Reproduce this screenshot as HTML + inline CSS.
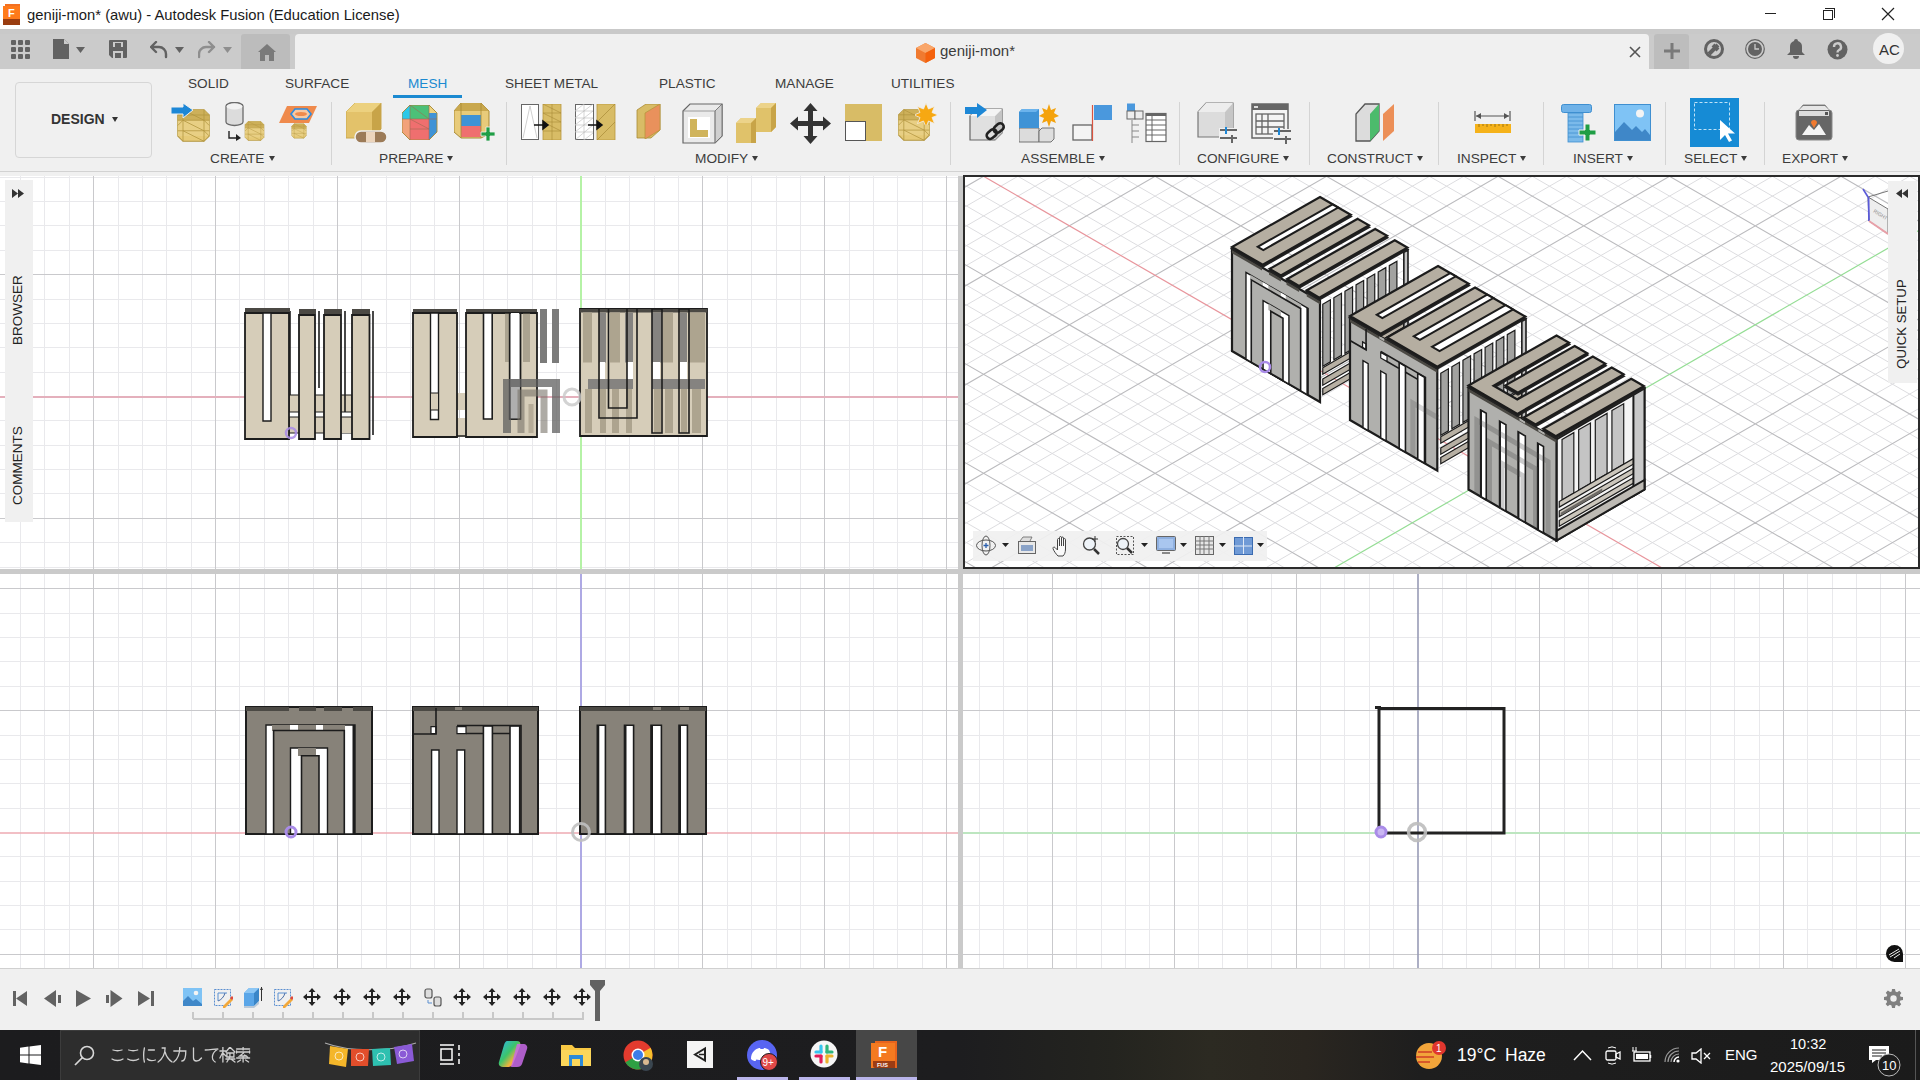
<!DOCTYPE html>
<html><head><meta charset="utf-8">
<style>
*{margin:0;padding:0;box-sizing:border-box}
html,body{width:1920px;height:1080px;overflow:hidden;background:#f0f0f0;font-family:"Liberation Sans",sans-serif;position:relative}
.a{position:absolute}
.t{position:absolute;white-space:nowrap;line-height:1}
#title{left:0;top:0;width:1920px;height:29px;background:#fff}
#qbar{left:0;top:29px;width:1920px;height:40px;background:#cbcbcb}
#ribbon{left:0;top:69px;width:1920px;height:103px;background:#f0f0f0;border-bottom:1px solid #d2d2d2}
.tab{font-size:13.6px;color:#3c3c3c;top:77px}
.grp{font-size:13.7px;color:#3c3c3c;top:152px}
.sep{position:absolute;top:102px;width:1px;height:63px;background:#d4d4d4}
.tri{display:inline-block;width:0;height:0;border-left:3.5px solid transparent;border-right:3.5px solid transparent;border-top:5px solid #3c3c3c;margin-left:4px;vertical-align:2px}
#vp{left:0;top:172px;width:1920px;height:797px;background:#cacaca}
#timeline{left:0;top:969px;width:1920px;height:61px;background:#f0f0f0}
#taskbar{left:0;top:1030px;width:1920px;height:50px;background:#1f2023}
</style></head><body>
<div id="title" class="a">
  <svg class="a" style="left:3px;top:4px" width="19" height="21" viewBox="0 0 19 21"><path d="M2 0h15v18H2z" fill="#f37021"/><path d="M0 2h17v19H0z" fill="#ff7a1a"/><path d="M0 15h17v6H0z" fill="#9a3d10"/><text x="5" y="13" font-size="11" font-weight="bold" fill="#fff" font-family="Liberation Sans">F</text></svg>
  <div class="t" style="left:27px;top:8px;font-size:14.8px;color:#1a1a1a">geniji-mon* (awu) - Autodesk Fusion (Education License)</div>
  <div class="a" style="left:1765px;top:13px;width:11px;height:1px;background:#222"></div>
  <div class="a" style="left:1823px;top:10px;width:10px;height:10px;border:1px solid #222"></div>
  <div class="a" style="left:1825px;top:8px;width:10px;height:10px;border-top:1px solid #222;border-right:1px solid #222"></div>
  <svg class="a" style="left:1881px;top:7px" width="14" height="14"><path d="M1 1L13 13M13 1L1 13" stroke="#222" stroke-width="1.2"/></svg>
</div>
<div id="qbar" class="a">
  <div class="a" style="left:0;top:0;width:1920px;height:5px;background:#c9c9c9"></div>
  <svg class="a" style="left:11px;top:11px" width="19" height="19"><g fill="#626262"><rect x="0" y="0" width="5" height="5" rx="1"/><rect x="7" y="0" width="5" height="5" rx="1"/><rect x="14" y="0" width="5" height="5" rx="1"/><rect x="0" y="7" width="5" height="5" rx="1"/><rect x="7" y="7" width="5" height="5" rx="1"/><rect x="14" y="7" width="5" height="5" rx="1"/><rect x="0" y="14" width="5" height="5" rx="1"/><rect x="7" y="14" width="5" height="5" rx="1"/><rect x="14" y="14" width="5" height="5" rx="1"/></g></svg>
  <svg class="a" style="left:53px;top:10px" width="34" height="21"><path d="M0 0h11l5 5v15H0z" fill="#626262"/><path d="M11 0v5h5z" fill="#cbcbcb"/><path d="M23 8h9l-4.5 6z" fill="#626262"/></svg>
  <svg class="a" style="left:109px;top:11px" width="18" height="18"><path d="M0 1a1 1 0 0 1 1-1h16a1 1 0 0 1 1 1v16a1 1 0 0 1-1 1H3l-3-3z" fill="#626262"/><rect x="4" y="2" width="10" height="5" fill="#cbcbcb"/><rect x="6" y="3" width="6" height="4" fill="#626262"/><rect x="4" y="11" width="10" height="7" fill="#cbcbcb"/><rect x="6" y="13" width="6" height="5" fill="#626262"/></svg>
  <svg class="a" style="left:150px;top:12px" width="36" height="18"><path d="M6 1L1 6l5 5M1 6h8a7 7 0 0 1 7 7v3" fill="none" stroke="#626262" stroke-width="2.4" stroke-linecap="round" stroke-linejoin="round"/><path d="M25 6h9l-4.5 6z" fill="#626262"/></svg>
  <svg class="a" style="left:198px;top:12px" width="36" height="18"><path d="M11 1l5 5-5 5M16 6H8a7 7 0 0 0-7 7v3" fill="none" stroke="#8e8e8e" stroke-width="2.4" stroke-linecap="round" stroke-linejoin="round"/><path d="M25 6h9l-4.5 6z" fill="#8e8e8e"/></svg>
  <div class="a" style="left:241px;top:5px;width:49px;height:35px;background:#bcbcbc;border-radius:3px 3px 0 0"></div>
  <svg class="a" style="left:258px;top:15px" width="19" height="18"><path d="M9 0l9 8h-2v9H2V8H0z" fill="#7a7a7a"/><rect x="7" y="11" width="4" height="6" fill="#bcbcbc"/></svg>
  <div class="a" style="left:295px;top:5px;width:1354px;height:35px;background:#f0f0f0;border-radius:4px 4px 0 0"></div>
  <svg class="a" style="left:916px;top:14px" width="19" height="20"><path d="M9.5 0L19 5v10l-9.5 5L0 15V5z" fill="#f07a30"/><path d="M9.5 0L19 5l-9.5 5L0 5z" fill="#f9a66a"/><path d="M9.5 10L19 5v10l-9.5 5z" fill="#f4610d"/></svg>
  <div class="t" style="left:940px;top:14px;font-size:15px;color:#3c3c3c">geniji-mon*</div>
  <svg class="a" style="left:1629px;top:17px" width="12" height="12"><path d="M1 1L11 11M11 1L1 11" stroke="#555" stroke-width="1.6"/></svg>
  <div class="a" style="left:1654px;top:5px;width:35px;height:35px;background:#bdbdbd;border-radius:3px 3px 0 0"></div>
  <svg class="a" style="left:1664px;top:14px" width="16" height="16"><path d="M8 0v16M0 8h16" stroke="#7a7a7a" stroke-width="3"/></svg>
  <svg class="a" style="left:1704px;top:10px" width="20" height="20"><circle cx="10" cy="10" r="8.5" fill="none" stroke="#626262" stroke-width="3"/><path d="M6 14l8-8M9 6l5 5M5 15l2-2" stroke="#626262" stroke-width="4"/></svg>
  <svg class="a" style="left:1745px;top:10px" width="20" height="20"><circle cx="10" cy="10" r="9.3" fill="none" stroke="#626262" stroke-width="1.2"/><circle cx="10" cy="10" r="7" fill="#626262"/><path d="M10 5v5h4" fill="none" stroke="#cbcbcb" stroke-width="1.3"/></svg>
  <svg class="a" style="left:1787px;top:10px" width="18" height="20"><path d="M9 0a2 2 0 0 1 2 2a6 6 0 0 1 4 6v5l3 3H0l3-3V8a6 6 0 0 1 4-6a2 2 0 0 1 2-2z" fill="#626262"/><path d="M6 17h6a3 3 0 0 1-6 0z" fill="#626262"/></svg>
  <svg class="a" style="left:1827px;top:10px" width="21" height="21"><circle cx="10.5" cy="10.5" r="10" fill="#626262"/><path d="M7 8a3.5 3.5 0 1 1 5 3c-1.3.7-1.5 1.2-1.5 2.5" fill="none" stroke="#cbcbcb" stroke-width="2.4"/><circle cx="10.5" cy="16.5" r="1.4" fill="#cbcbcb"/></svg>
  <div class="a" style="left:1873px;top:4px;width:31px;height:31px;border-radius:50%;background:#f0f0f0"></div>
  <div class="t" style="left:1879px;top:13px;font-size:15px;color:#333">AC</div>
</div>
<div id="ribbon" class="a">
  <div class="a" style="left:15px;top:13px;width:137px;height:76px;border:1px solid #d6d6d6;border-radius:4px;background:#f0f0f0"></div>
  <div class="t" style="left:51px;top:43px;font-size:14px;font-weight:bold;color:#333">DESIGN<span class="tri" style="margin-left:7px;border-top-color:#333"></span></div>
</div>
<div class="t tab" style="left:188px">SOLID</div>
<div class="t tab" style="left:285px">SURFACE</div>
<div class="t tab" style="left:408px;color:#1b8ad1">MESH</div>
<div class="a" style="left:393px;top:95px;width:69px;height:3px;background:#1b8ad1"></div>
<div class="t tab" style="left:505px">SHEET METAL</div>
<div class="t tab" style="left:659px">PLASTIC</div>
<div class="t tab" style="left:775px">MANAGE</div>
<div class="t tab" style="left:891px">UTILITIES</div>
<div class="t grp" style="left:210px">CREATE<span class="tri"></span></div>
<div class="t grp" style="left:379px">PREPARE<span class="tri"></span></div>
<div class="t grp" style="left:695px">MODIFY<span class="tri"></span></div>
<div class="t grp" style="left:1021px">ASSEMBLE<span class="tri"></span></div>
<div class="t grp" style="left:1197px">CONFIGURE<span class="tri"></span></div>
<div class="t grp" style="left:1327px">CONSTRUCT<span class="tri"></span></div>
<div class="t grp" style="left:1457px">INSPECT<span class="tri"></span></div>
<div class="t grp" style="left:1573px">INSERT<span class="tri"></span></div>
<div class="t grp" style="left:1684px">SELECT<span class="tri"></span></div>
<div class="t grp" style="left:1782px">EXPORT<span class="tri"></span></div>
<div class="sep" style="left:331px"></div>
<div class="sep" style="left:506px"></div>
<div class="sep" style="left:950px"></div>
<div class="sep" style="left:1179px"></div>
<div class="sep" style="left:1309px"></div>
<div class="sep" style="left:1438px"></div>
<div class="sep" style="left:1543px"></div>
<div class="sep" style="left:1665px"></div>
<div class="sep" style="left:1764px"></div>
<svg class="a" style="left:176px;top:108px" width="35" height="35" viewBox="0 0 40 40"><path d="M8 2h24l6 6v24l-6 6H8l-6-6V8z" fill="#e6ca78" stroke="#b39640" stroke-width="1.2"/><path d="M8 2h24l6 6v6H2V8z" fill="#cdb05a"/><path d="M2 14h36v18H2z" fill="#e8cf84"/><path d="M2 8h36M2 14h36M2 26h36M8 2v36M32 2v36M8 14l24 12M8 26l24 12M8 2l24 12M2 20l6-6M32 14l6 6M32 26l6 6" fill="none" stroke="#b39640" stroke-width="0.9"/></svg>
<svg class="a" style="left:171px;top:103px" width="24" height="16"><path d="M0 4h12V0l10 7-10 8v-4H0z" fill="#1d87d6" stroke="#f0f0f0" stroke-width="1"/></svg>
<svg class="a" style="left:225px;top:102px" width="20" height="25"><path d="M1 4a8.5 3.5 0 0 1 17 0v16a8.5 3.5 0 0 1-17 0z" fill="#dcdcdc" stroke="#6b6b6b" stroke-width="1.3"/><ellipse cx="9.5" cy="4.5" rx="8" ry="3" fill="#f2f2f2"/></svg>
<svg class="a" style="left:244px;top:119px" width="21" height="24" viewBox="0 0 40 40"><path d="M8 2h24l6 6v24l-6 6H8l-6-6V8z" fill="#e6ca78" stroke="#b39640" stroke-width="1.2"/><path d="M8 2h24l6 6v6H2V8z" fill="#cdb05a"/><path d="M2 14h36v18H2z" fill="#e8cf84"/><path d="M2 8h36M2 14h36M2 26h36M8 2v36M32 2v36M8 14l24 12M8 26l24 12M8 2l24 12M2 20l6-6M32 14l6 6M32 26l6 6" fill="none" stroke="#b39640" stroke-width="0.9"/></svg>
<svg class="a" style="left:228px;top:131px" width="14" height="10"><path d="M1 0v7h8" fill="none" stroke="#222" stroke-width="1.4"/><path d="M8 3l5 4-5 3z" fill="#222"/></svg>
<svg class="a" style="left:288px;top:123px" width="22" height="16" viewBox="0 0 40 40"><path d="M8 2h24l6 6v24l-6 6H8l-6-6V8z" fill="#e6ca78" stroke="#b39640" stroke-width="1.2"/><path d="M8 2h24l6 6v6H2V8z" fill="#cdb05a"/><path d="M2 14h36v18H2z" fill="#e8cf84"/><path d="M2 8h36M2 14h36M2 26h36M8 2v36M32 2v36M8 14l24 12M8 26l24 12M8 2l24 12M2 20l6-6M32 14l6 6M32 26l6 6" fill="none" stroke="#b39640" stroke-width="0.9"/></svg>
<svg class="a" style="left:279px;top:105px" width="39" height="19"><path d="M8 1h30l-8 17H0z" fill="#ef8a4c"/><path d="M12 9l4-5h12l4 5-4 5H16z" fill="#f7c9a3" stroke="#2b8be0" stroke-width="1.6"/><ellipse cx="22" cy="9" rx="6" ry="2" fill="#ef8a4c"/></svg>
<svg class="a" style="left:346px;top:103px" width="41" height="41"><path d="M0 9l9-9h26v26l-9 9H0z" fill="#e3c26a" stroke="#c9a84e" stroke-width="1"/><path d="M0 9l9-9h26l-9 9z" fill="#ecd17f"/><path d="M26 9l9-9v26l-9 9z" fill="#c8a448"/><rect x="9" y="28" width="32" height="12" rx="6" fill="#9c7b58" stroke="#f0f0f0" stroke-width="1.5"/><rect x="20" y="29" width="9" height="10" fill="#ecd5bd"/></svg>
<svg class="a" style="left:402px;top:105px" width="36" height="35" viewBox="0 0 36 35"><path d="M8 0h19l8 8v19l-8 8H8l-8-8V8z" fill="#ef6f6f"/><path d="M8 0h19v14H8z" fill="#4cc078"/><path d="M0 8l8-8v14H0z" fill="#2bc8e8"/><path d="M27 0l8 8v19l-8 8z" fill="#3f93d6"/><path d="M27 0l8 8h-8z" fill="#edd27f"/><path d="M0 14h8v21l-8-8z" fill="#f2a27a"/><path d="M8 0h19l8 8v19l-8 8H8l-8-8V8z" fill="none" stroke="#a88a35" stroke-width="0.9"/><path d="M8 0v35M27 0v35M0 14h35M8 24h19M8 14l19 10M8 0l19 14" stroke="#a06a50" stroke-width="0.6" fill="none"/></svg>
<svg class="a" style="left:454px;top:103px" width="41" height="39" viewBox="0 0 41 39"><path d="M7 0h20l8 8v23l-8 4H7l-7-6V8z" fill="#e8cb7a" stroke="#a88a35" stroke-width="1"/><path d="M7 0h20l8 8H0z" fill="#c9a84e"/><rect x="7" y="12" width="20" height="11" fill="#3f93d6"/><rect x="7" y="23" width="20" height="11" fill="#ef6f6f"/><path d="M7 0v35M27 0v35" stroke="#a88a35" stroke-width="0.8"/><path d="M32 24h4v5h5v4h-5v5h-4v-5h-5v-4h5z" fill="#1f9e45" stroke="#f0f0f0" stroke-width="0.8"/></svg>
<svg class="a" style="left:521px;top:104px" width="41" height="36"><rect x="0.5" y="0.5" width="17" height="35" fill="#fff" stroke="#666" stroke-width="1"/><path d="M2 34L9 2l7 32" fill="none" stroke="#bbb" stroke-width="0.7"/><rect x="22" y="0" width="18" height="36" fill="#d8bc66" stroke="#b8973e" stroke-width="0.8"/><path d="M22 9h18M22 18h18M22 27h18M31 0v36M22 9l18 9M22 18l18 9M22 0l18 9" stroke="#a88a35" stroke-width="0.6" fill="none"/><path d="M13 21h12M22 17l5 4-5 4z" stroke="#111" stroke-width="1.5" fill="#111"/></svg>
<svg class="a" style="left:575px;top:104px" width="41" height="36"><rect x="0.5" y="0.5" width="18" height="35" fill="#fff" stroke="#666" stroke-width="1"/><path d="M0 7h18M0 14h18M0 21h18M0 28h18M9 0v36M0 7l9-7M0 14l18-14M0 21l18-14M0 28l18-14M0 36l18-15M9 36l9-7" stroke="#bbb" stroke-width="0.6" fill="none"/><rect x="22" y="0" width="18" height="36" fill="#d8bc66" stroke="#b8973e" stroke-width="0.8"/><path d="M22 36l18-18M22 18l18-18" stroke="#a88a35" stroke-width="0.7"/><path d="M13 21h12M22 17l5 4-5 4z" stroke="#111" stroke-width="1.5" fill="#111"/></svg>
<svg class="a" style="left:636px;top:104px" width="26" height="35"><path d="M1 6l9-6h14v26l-9 8H1z" fill="#d8bc66" stroke="#a88a35" stroke-width="0.8"/><path d="M9 9l15-9v26l-15 9z" fill="#e9915c" stroke="#b8973e" stroke-width="0.8"/></svg>
<svg class="a" style="left:682px;top:103px" width="41" height="41"><path d="M1 8l7-7h32v32l-7 7H1z" fill="#eaeaea" stroke="#666" stroke-width="1.2"/><path d="M33 8l7-7v32l-7 7z" fill="#d0d0d0" stroke="#666" stroke-width="0.8"/><path d="M1 8h32v32" fill="none" stroke="#888" stroke-width="0.8"/><rect x="6" y="14" width="22" height="21" fill="#fff"/><path d="M8 16h7v11h11v7H8z" fill="#d0b45c"/></svg>
<svg class="a" style="left:736px;top:103px" width="41" height="41"><path d="M0 20l5-5h15V5l5-5h15v24l-5 5H20v10l-5 1H0z" fill="#e0c26a"/><path d="M0 20l5-5h15l-5 5zM20 5l5-5h15l-5 5z" fill="#ecd38a"/><path d="M35 5l5-5v24l-5 5zM15 20l5-5v25h-5z" fill="#c8a448"/></svg>
<svg class="a" style="left:790px;top:103px" width="41" height="41"><path d="M20.5 0l7 8h-4.5v10h10v-4.5l8 7-8 7V23h-10v10h4.5l-7 8-7-8H18V23H8v4.5l-8-7 8-7V18h10V8h-4.5z" fill="#333"/></svg>
<svg class="a" style="left:845px;top:104px" width="38" height="37"><rect x="0" y="0" width="37" height="37" fill="#d8bc66"/><rect x="0.5" y="17.5" width="20" height="19" fill="#fff" stroke="#555" stroke-width="1"/></svg>
<svg class="a" style="left:897px;top:108px" width="34" height="34" viewBox="0 0 40 40"><path d="M8 2h24l6 6v24l-6 6H8l-6-6V8z" fill="#e6ca78" stroke="#b39640" stroke-width="1.2"/><path d="M8 2h24l6 6v6H2V8z" fill="#cdb05a"/><path d="M2 14h36v18H2z" fill="#e8cf84"/><path d="M2 8h36M2 14h36M2 26h36M8 2v36M32 2v36M8 14l24 12M8 26l24 12M8 2l24 12M2 20l6-6M32 14l6 6M32 26l6 6" fill="none" stroke="#b39640" stroke-width="0.9"/></svg>
<svg class="a" style="left:915px;top:103px" width="22" height="22"><path d="M11 0l2.5 6 6-2.5-2.5 6 6 2.5-6 2.5 2.5 6-6-2.5L11 24l-2.5-6-6 2.5 2.5-6L-1 12l6-2.5-2.5-6 6 2.5z" fill="#f7a812" stroke="#f0f0f0" stroke-width="0.8"/></svg>
<svg class="a" style="left:965px;top:103px" width="42" height="40"><path d="M5 37V13l7-7h25v24l-7 7z" fill="#e0e0e0" stroke="#666" stroke-width="1.2"/><path d="M30 13l7-7v24l-7 7z" fill="#c4c4c4"/><path d="M5 13l7-7h25l-7 7z" fill="#f4f4f4"/><path d="M0 4h12V0l10 7-10 8v-4H0z" fill="#1d87d6"/><g fill="none" stroke="#222" stroke-width="2.6"><rect x="21" y="28" width="11" height="7" rx="3.5" transform="rotate(-40 26 31)"/><rect x="28" y="22" width="11" height="7" rx="3.5" transform="rotate(-40 33 25)"/></g></svg>
<svg class="a" style="left:1019px;top:103px" width="40" height="40"><path d="M0 39V25h20v14z" fill="#dcdcdc" stroke="#666" stroke-width="0.9"/><path d="M20 39V28l3-3h12v11l-3 3z" fill="#dedede" stroke="#666" stroke-width="0.9"/><path d="M0 25V9l3-3h17v19z" fill="#3f93d6"/><path d="M0 9l3-3h17l-3 3z" fill="#6bb3ec"/><path d="M30 1l2 6 5-2-2 5 5 3-5 2 2 5-5-2-2 6-2-6-5 2 2-5-5-2 5-3-2-5 5 2z" fill="#f4a20c"/></svg>
<svg class="a" style="left:1072px;top:104px" width="42" height="38"><rect x="1" y="21" width="19" height="15" fill="#f4f4f4" stroke="#666" stroke-width="1.3"/><path d="M20.5 1v36" stroke="#d9533f" stroke-width="1.2"/><rect x="22" y="1" width="18" height="15" fill="#4a98dd"/></svg>
<svg class="a" style="left:1126px;top:103px" width="41" height="40"><rect x="1" y="7" width="8" height="8" fill="#4a98dd"/><rect x="1" y="0.5" width="8" height="7" fill="#4a98dd"/><rect x="1" y="8" width="8" height="8" fill="#eee" stroke="#666" stroke-width="1"/><rect x="9" y="8" width="8" height="8" fill="#eee" stroke="#666" stroke-width="1"/><path d="M6 17v27M6 22h7M6 28h7M6 34h7" stroke="#888" stroke-width="1"/><rect x="20" y="10.5" width="20" height="28" fill="#fff" stroke="#666" stroke-width="1.2"/><rect x="20" y="10" width="20" height="3" fill="#666"/><path d="M20 17h20M20 22h20M20 27h20M20 32h20M26 13v26" stroke="#666" stroke-width="1"/></svg>
<svg class="a" style="left:1197px;top:102px" width="42" height="42"><path d="M1 35V10l8-9h27v26l-8 8z" fill="#dcdcdc" stroke="#777" stroke-width="1.2"/><path d="M28 10l8-9v26l-8 8z" fill="#c6c6c6"/><path d="M1 10l8-9h27l-8 9z" fill="#ededed"/><rect x="22" y="26" width="18" height="18" fill="#f0f0f0"/><path d="M23 28h17M23 36h17" stroke="#666" stroke-width="2"/><path d="M29 25v7" stroke="#1d87d6" stroke-width="2"/><path d="M35 33v8" stroke="#666" stroke-width="2"/></svg>
<svg class="a" style="left:1251px;top:103px" width="42" height="41"><rect x="1" y="1" width="36" height="34" fill="#f4f4f4" stroke="#666" stroke-width="1.5"/><rect x="1" y="1" width="36" height="6" fill="#666"/><rect x="3" y="3" width="4" height="2" fill="#ddd"/><rect x="5" y="11" width="28" height="20" fill="none" stroke="#666" stroke-width="1.3"/><path d="M11 11v20M17 11v20M5 18h28M5 24h28" stroke="#666" stroke-width="1.3"/><rect x="22" y="26" width="19" height="15" fill="#f0f0f0"/><path d="M23 28h17M23 36h17" stroke="#666" stroke-width="2"/><path d="M28 25v7" stroke="#1d87d6" stroke-width="2"/><path d="M35 33v8" stroke="#666" stroke-width="2"/></svg>
<svg class="a" style="left:1355px;top:102px" width="42" height="41"><path d="M1 39V12l9-10h14v27l-9 10z" fill="#dcdcdc" stroke="#555" stroke-width="1.3"/><path d="M15 39V12l9-10v27z" fill="#4cbb6c"/><path d="M28 39V12l11-10v27z" fill="#ec8f57"/></svg>
<svg class="a" style="left:1474px;top:111px" width="38" height="23"><path d="M1 0v10M36 0v10M2 5h33" stroke="#555" stroke-width="1.2"/><path d="M2 5l5-3v6zM35 5l-5-3v6z" fill="#555"/><rect x="1" y="13" width="36" height="9" fill="#f5b21a"/><path d="M5 13v3M9 13v2M13 13v3M17 13v2M21 13v3M25 13v2M29 13v3M33 13v2" stroke="#8a6410" stroke-width="0.8"/></svg>
<svg class="a" style="left:1561px;top:104px" width="40" height="40"><rect x="0.5" y="0.5" width="30" height="8" rx="2" fill="#6fb2e8" stroke="#3f8fd0"/><rect x="7" y="9" width="15" height="29" fill="#7bbaea" stroke="#3f8fd0" stroke-width="0.8"/><path d="M7 13h15M7 17h15M7 21h15M7 25h15M7 29h15M7 33h15" stroke="#3f8fd0" stroke-width="0.8"/><path d="M24 20h5v6h6v5h-6v6h-5v-6h-6v-5h6z" fill="#1f9e45" stroke="#f0f0f0" stroke-width="1"/></svg>
<svg class="a" style="left:1614px;top:104px" width="37" height="37"><rect x="0.5" y="0.5" width="36" height="36" fill="#7fc3f5" stroke="#3f8fd0"/><circle cx="26" cy="9.5" r="4" fill="#f4f4f4"/><path d="M1 36V28l9-10 8 8 4-4 6 6 3-3 5 6v5z" fill="#3f87c8"/></svg>
<svg class="a" style="left:1690px;top:98px" width="49" height="49"><rect x="0" y="0" width="49" height="49" fill="#168bd5"/><rect x="4.5" y="4.5" width="35" height="27" fill="none" stroke="#bfe2f7" stroke-width="1" stroke-dasharray="3 2"/><path d="M30 22v20l5-5 4 7 3-1.5-4-7h7z" fill="#fff"/></svg>
<svg class="a" style="left:1795px;top:104px" width="38" height="37"><path d="M4 6l4-5h22l4 5h0a3 3 0 0 1 3 3v24a3 3 0 0 1-3 3H4a3 3 0 0 1-3-3V9a3 3 0 0 1 3-3z" fill="#666" stroke="#888" stroke-width="1"/><path d="M8 2h22l4 4H4z" fill="#e6e6e6"/><rect x="4" y="7" width="30" height="5" fill="#dcdcdc"/><rect x="30" y="8" width="3" height="3" fill="#555"/><path d="M7 31l7-10 5 5 5-6 7 11z" fill="#f4f4f4"/><path d="M19 16a3 3 0 0 1 3 3l-3 5-3-5a3 3 0 0 1 3-3z" fill="#f07a30"/></svg>
<div id="vp" class="a"></div>
<!--VP-->
<div class="a" style="left:0;top:172px;width:1920px;height:4px;background:#f0f0f0"></div>
<svg class="a" style="left:0px;top:176px;background:#fff" width="958" height="393">
<path d="M20.5 0V393M44.5 0V393M69.5 0V393M118.5 0V393M142.5 0V393M166.5 0V393M191.5 0V393M239.5 0V393M264.5 0V393M288.5 0V393M313.5 0V393M361.5 0V393M386.5 0V393M410.5 0V393M434.5 0V393M483.5 0V393M507.5 0V393M532.5 0V393M556.5 0V393M605.5 0V393M629.5 0V393M654.5 0V393M678.5 0V393M727.5 0V393M751.5 0V393M776.5 0V393M800.5 0V393M849.5 0V393M873.5 0V393M897.5 0V393M922.5 0V393M0 1.5H958M0 25.5H958M0 49.5H958M0 74.5H958M0 123.5H958M0 147.5H958M0 171.5H958M0 196.5H958M0 244.5H958M0 269.5H958M0 293.5H958M0 317.5H958M0 366.5H958M0 391.5H958" stroke="#e9e9ec" stroke-width="1" fill="none"/>
<path d="M93.5 0V393M215.5 0V393M337.5 0V393M459.5 0V393M702.5 0V393M824.5 0V393M946.5 0V393M0 98.5H958M0 342.5H958" stroke="#c9c9cc" stroke-width="1" fill="none"/>
<path d="M0 221H958" stroke="#e4b0bc" stroke-width="2"/>
<path d="M581 0V393" stroke="#b5f2a6" stroke-width="2"/>
<g transform="translate(0 -176)"><g transform="translate(245 308)"><rect x="44" y="87" width="63" height="17" fill="#d6cdb9" stroke="#1c1c1c" stroke-width="1.2" vector-effect="non-scaling-stroke" /><rect x="44" y="109" width="79" height="16" fill="#d6cdb9" stroke="#1c1c1c" stroke-width="1.2" vector-effect="non-scaling-stroke" /><rect x="96" y="110" width="11" height="15" fill="#d6cdb9" /><path d="M45 3V87M74 3V80M100 3V104M128 3V127" fill="none" stroke="#1c1c1c" stroke-width="1.6" vector-effect="non-scaling-stroke"/><rect x="0" y="0" width="45" height="5" fill="#4b4944" /><rect x="54" y="1" width="17" height="5" fill="#4b4944" /><rect x="79" y="1" width="18" height="5" fill="#4b4944" /><rect x="107" y="1" width="18" height="5" fill="#4b4944" /><path d="M0 5H44V131H0Z" fill="#d6cdb9" stroke="#1c1c1c" stroke-width="1.8" vector-effect="non-scaling-stroke"/><rect x="18" y="5" width="8" height="108" fill="#ffffff" stroke="#1c1c1c" stroke-width="1.4" vector-effect="non-scaling-stroke" /><rect x="54" y="7" width="16" height="124" fill="#d6cdb9" stroke="#1c1c1c" stroke-width="1.8" vector-effect="non-scaling-stroke" /><rect x="79" y="7" width="17" height="124" fill="#d6cdb9" stroke="#1c1c1c" stroke-width="1.8" vector-effect="non-scaling-stroke" /><rect x="107" y="7" width="17.5" height="124" fill="#d6cdb9" stroke="#1c1c1c" stroke-width="1.8" vector-effect="non-scaling-stroke" /></g><g transform="translate(413 309)"><rect x="0" y="0" width="44" height="4" fill="#4b4944" /><rect x="53" y="0" width="71" height="4" fill="#4b4944" /><rect x="44" y="84" width="9" height="17" fill="#d6cdb9" /><rect x="44" y="109" width="9" height="17" fill="#d6cdb9" /><rect x="44" y="126" width="9" height="2" fill="#4b4944" /><rect x="0" y="4" width="44" height="124" fill="#d6cdb9" stroke="#1c1c1c" stroke-width="1.8" vector-effect="non-scaling-stroke" /><rect x="17.5" y="4" width="8" height="106.5" fill="#ffffff" stroke="#1c1c1c" stroke-width="1.4" vector-effect="non-scaling-stroke" /><rect x="17.5" y="84" width="8" height="17" fill="#d6cdb9" stroke="#1c1c1c" stroke-width="1" vector-effect="non-scaling-stroke" /><rect x="53" y="4" width="71" height="124" fill="#d6cdb9" stroke="#1c1c1c" stroke-width="1.8" vector-effect="non-scaling-stroke" /><rect x="70.5" y="4" width="8.7" height="106" fill="#ffffff" stroke="#1c1c1c" stroke-width="1.6" vector-effect="non-scaling-stroke" /><rect x="96.7" y="4" width="10.7" height="106" fill="#ffffff" stroke="#1c1c1c" stroke-width="1.6" vector-effect="non-scaling-stroke" /><rect x="92" y="4" width="6" height="49" fill="rgba(120,112,96,0.45)" /><rect x="110" y="4" width="7" height="49" fill="rgba(120,112,96,0.45)" /><rect x="96.7" y="4" width="10.7" height="106" fill="#ffffff" stroke="#1c1c1c" stroke-width="1.6" vector-effect="non-scaling-stroke" /><rect x="98" y="4" width="8" height="49" fill="#ffffff" /><rect x="98" y="70" width="8" height="40" fill="rgba(110,110,110,0.55)" /><rect x="127" y="0" width="7" height="54" fill="#7b7b7a" /><rect x="139" y="0" width="7" height="54" fill="#7b7b7a" /><path d="M94 124V74H143V124" fill="none" stroke="rgba(95,95,95,0.75)" stroke-width="8" vector-effect="non-scaling-stroke"/><path d="M108 124V84H131V124" fill="none" stroke="rgba(120,115,105,0.6)" stroke-width="7" vector-effect="non-scaling-stroke"/><path d="M118 124V95" fill="none" stroke="rgba(150,140,120,0.5)" stroke-width="5" vector-effect="non-scaling-stroke"/></g><g transform="translate(580 309)"><rect x="0" y="0" width="127" height="127" fill="#d6cdb9" stroke="#1c1c1c" stroke-width="1.8" vector-effect="non-scaling-stroke" /><rect x="0" y="0" width="127" height="3.5" fill="#4b4944" /><rect x="3" y="3.5" width="9" height="50" fill="#ada48f" /><rect x="19" y="3.5" width="7" height="50" fill="#858380" /><rect x="30" y="3.5" width="10" height="50" fill="#ada48f" /><rect x="45" y="3.5" width="8" height="50" fill="#858380" /><rect x="72" y="3.5" width="10" height="50" fill="#858380" /><rect x="83" y="3.5" width="10" height="50" fill="#ada48f" /><rect x="100" y="3.5" width="7" height="50" fill="#858380" /><rect x="108" y="3.5" width="17" height="50" fill="#ada48f" /><rect x="20" y="53" width="5" height="17" fill="#ffffff" /><rect x="47" y="53" width="6" height="17" fill="#ffffff" /><rect x="73" y="53" width="7" height="17" fill="#ffffff" /><rect x="100" y="53" width="7" height="17" fill="#ffffff" /><rect x="8" y="70" width="45" height="10" fill="#858380" /><rect x="72" y="70" width="53" height="10" fill="#858380" /><rect x="5" y="80" width="7" height="44" fill="#ada48f" /><rect x="20" y="80" width="6" height="44" fill="#ada48f" /><rect x="32" y="80" width="7" height="44" fill="#ada48f" /><rect x="46" y="80" width="6" height="44" fill="#ada48f" /><rect x="74" y="80" width="7" height="44" fill="#ada48f" /><rect x="85" y="80" width="8" height="44" fill="#ada48f" /><rect x="101" y="80" width="6" height="44" fill="#ada48f" /><rect x="112" y="80" width="9" height="44" fill="#ada48f" /><path d="M19 0V109H57V0M28.5 0V99H47V0" fill="none" stroke="#1c1c1c" stroke-width="1.6" vector-effect="non-scaling-stroke"/><rect x="72" y="0" width="10" height="124" fill="none" stroke="#1c1c1c" stroke-width="1.6" vector-effect="non-scaling-stroke" /><rect x="99" y="0" width="10" height="124" fill="none" stroke="#1c1c1c" stroke-width="1.6" vector-effect="non-scaling-stroke" /></g><circle cx="291" cy="433" r="5" fill="none" stroke="#a98be8" stroke-width="2.5" opacity="0.85"/><circle cx="572" cy="397" r="8" fill="none" stroke="#c8c8c8" stroke-width="3" opacity="0.8"/></g>
</svg>
<svg class="a" style="left:0px;top:574px;background:#fff" width="958" height="394">
<path d="M20.5 0V394M44.5 0V394M69.5 0V394M118.5 0V394M142.5 0V394M166.5 0V394M191.5 0V394M239.5 0V394M264.5 0V394M288.5 0V394M313.5 0V394M361.5 0V394M386.5 0V394M410.5 0V394M434.5 0V394M483.5 0V394M507.5 0V394M532.5 0V394M556.5 0V394M605.5 0V394M629.5 0V394M654.5 0V394M678.5 0V394M727.5 0V394M751.5 0V394M776.5 0V394M800.5 0V394M849.5 0V394M873.5 0V394M897.5 0V394M922.5 0V394M0 39.5H958M0 63.5H958M0 87.5H958M0 112.5H958M0 161.5H958M0 185.5H958M0 209.5H958M0 234.5H958M0 282.5H958M0 307.5H958M0 331.5H958M0 355.5H958" stroke="#e9e9ec" stroke-width="1" fill="none"/>
<path d="M93.5 0V394M215.5 0V394M337.5 0V394M459.5 0V394M702.5 0V394M824.5 0V394M946.5 0V394M0 14.5H958M0 136.5H958M0 380.5H958" stroke="#c9c9cc" stroke-width="1" fill="none"/>
<path d="M0 259H958" stroke="#eeaab2" stroke-width="1.6"/>
<path d="M581 0V394" stroke="#aea9e4" stroke-width="2"/>
<g transform="translate(0 -574)"><g transform="translate(246 707)"><rect x="0" y="0" width="126" height="127" fill="#878279" stroke="#1c1c1c" stroke-width="2" vector-effect="non-scaling-stroke" /><rect x="0" y="0" width="43" height="4" fill="#4b4944" /><rect x="53" y="0" width="17" height="4" fill="#4b4944" /><rect x="78" y="0" width="18" height="4" fill="#4b4944" /><rect x="107" y="0" width="19" height="4" fill="#4b4944" /><rect x="20" y="18" width="89" height="109" fill="#ffffff" stroke="#1c1c1c" stroke-width="1.4" vector-effect="non-scaling-stroke" /><rect x="26" y="18" width="73" height="6" fill="#878279" /><rect x="44" y="18" width="8" height="6" fill="#ffffff" /><rect x="70" y="18" width="7" height="6" fill="#ffffff" /><rect x="27.6" y="23.5" width="70.7" height="103.5" fill="#878279" stroke="#1c1c1c" stroke-width="1.6" vector-effect="non-scaling-stroke" /><rect x="44.5" y="41" width="37" height="86" fill="#ffffff" stroke="#1c1c1c" stroke-width="1.4" vector-effect="non-scaling-stroke" /><rect x="52" y="41" width="18" height="8" fill="#878279" /><rect x="55.5" y="48.7" width="17.5" height="78.3" fill="#878279" stroke="#1c1c1c" stroke-width="1.6" vector-effect="non-scaling-stroke" /><rect x="106.5" y="18" width="2.5" height="109" fill="#1c1c1c" /></g><g transform="translate(413 707)"><rect x="0" y="0" width="125" height="127" fill="#878279" stroke="#1c1c1c" stroke-width="2" vector-effect="non-scaling-stroke" /><rect x="0" y="0" width="125" height="4" fill="#4b4944" /><rect x="42" y="0" width="7" height="3" fill="#878279" /><rect x="18" y="19.6" width="5" height="7" fill="#ffffff" stroke="#1c1c1c" stroke-width="1.2" vector-effect="non-scaling-stroke" /><rect x="44" y="19.6" width="9" height="7" fill="#ffffff" stroke="#1c1c1c" stroke-width="1.2" vector-effect="non-scaling-stroke" /><rect x="18.6" y="43" width="7.4" height="84" fill="#ffffff" stroke="#1c1c1c" stroke-width="1.4" vector-effect="non-scaling-stroke" /><rect x="44" y="43" width="7.7" height="84" fill="#ffffff" stroke="#1c1c1c" stroke-width="1.4" vector-effect="non-scaling-stroke" /><rect x="70.4" y="19" width="9" height="108" fill="#ffffff" stroke="#1c1c1c" stroke-width="1.6" vector-effect="non-scaling-stroke" /><rect x="97" y="19" width="9.7" height="108" fill="#ffffff" stroke="#1c1c1c" stroke-width="1.6" vector-effect="non-scaling-stroke" /><path d="M23 1V27H0M44 18.5H108V127M53 26.5H70M79 26.5H97" fill="none" stroke="#1c1c1c" stroke-width="1.6" vector-effect="non-scaling-stroke"/></g><g transform="translate(580 707)"><rect x="0" y="0" width="126" height="127" fill="#878279" stroke="#1c1c1c" stroke-width="2" vector-effect="non-scaling-stroke" /><rect x="0" y="0" width="126" height="4" fill="#4b4944" /><rect x="73" y="0" width="8" height="3" fill="#878279" /><rect x="100" y="0" width="9" height="3" fill="#878279" /><rect x="17.3" y="18.3" width="8.1" height="108.7" fill="#ffffff" stroke="#1c1c1c" stroke-width="1.6" vector-effect="non-scaling-stroke" /><rect x="17.3" y="18.3" width="2" height="108.7" fill="#1c1c1c" /><rect x="44.5" y="18.3" width="9.1" height="108.7" fill="#ffffff" stroke="#1c1c1c" stroke-width="1.6" vector-effect="non-scaling-stroke" /><rect x="44.5" y="18.3" width="2" height="108.7" fill="#1c1c1c" /><rect x="71" y="18.3" width="10.4" height="108.7" fill="#ffffff" stroke="#1c1c1c" stroke-width="1.6" vector-effect="non-scaling-stroke" /><rect x="71" y="18.3" width="2" height="108.7" fill="#1c1c1c" /><rect x="99" y="18.3" width="8.4" height="108.7" fill="#ffffff" stroke="#1c1c1c" stroke-width="1.6" vector-effect="non-scaling-stroke" /><rect x="99" y="18.3" width="2" height="108.7" fill="#1c1c1c" /></g><circle cx="581" cy="832" r="8.5" fill="none" stroke="#c0c0c0" stroke-width="3" opacity="0.9"/><circle cx="291" cy="832" r="5" fill="none" stroke="#a98be8" stroke-width="3"/></g>
</svg>
<svg class="a" style="left:963px;top:574px;background:#fff" width="957" height="394">
<path d="M16.5 0V394M40.5 0V394M64.5 0V394M113.5 0V394M138.5 0V394M162.5 0V394M186.5 0V394M235.5 0V394M259.5 0V394M284.5 0V394M308.5 0V394M357.5 0V394M381.5 0V394M406.5 0V394M430.5 0V394M479.5 0V394M503.5 0V394M528.5 0V394M552.5 0V394M601.5 0V394M625.5 0V394M649.5 0V394M674.5 0V394M722.5 0V394M747.5 0V394M771.5 0V394M796.5 0V394M844.5 0V394M869.5 0V394M893.5 0V394M917.5 0V394M0 39.5H957M0 63.5H957M0 87.5H957M0 112.5H957M0 161.5H957M0 185.5H957M0 209.5H957M0 234.5H957M0 282.5H957M0 307.5H957M0 331.5H957M0 355.5H957" stroke="#e9e9ec" stroke-width="1" fill="none"/>
<path d="M89.5 0V394M211.5 0V394M333.5 0V394M576.5 0V394M698.5 0V394M820.5 0V394M942.5 0V394M0 14.5H957M0 136.5H957M0 380.5H957" stroke="#c9c9cc" stroke-width="1" fill="none"/>
<path d="M0 259H957" stroke="#bde6c0" stroke-width="2"/>
<path d="M455 0V394" stroke="#989bb6" stroke-width="1.6"/>
<g transform="translate(-963 -574)"><rect x="1379" y="708.5" width="125" height="124.5" fill="none" stroke="#222" stroke-width="3"/><rect x="1375" y="706" width="6" height="3" fill="#222"/><circle cx="1417" cy="832" r="8.5" fill="none" stroke="#bdbdbd" stroke-width="3.5" opacity="0.9"/><circle cx="1381" cy="832" r="5" fill="#c9b6f2" stroke="#a98be8" stroke-width="3"/></g>
</svg>
<svg class="a" style="left:963px;top:175px;background:#fff" width="957" height="394">
<path d="M0 -584.8L957 -32.3M0 -565.0L957 -12.5M0 -545.2L957 7.3M0 -525.4L957 27.1M0 -485.8L957 66.7M0 -466.0L957 86.5M0 -446.2L957 106.3M0 -426.4L957 126.1M0 -386.8L957 165.7M0 -367.0L957 185.5M0 -347.2L957 205.3M0 -327.4L957 225.1M0 -287.8L957 264.7M0 -268.0L957 284.5M0 -248.2L957 304.3M0 -228.4L957 324.1M0 -188.8L957 363.7M0 -169.0L957 383.5M0 -149.2L957 403.3M0 -129.4L957 423.1M0 -89.8L957 462.7M0 -70.0L957 482.5M0 -50.2L957 502.3M0 -30.4L957 522.1M0 9.2L957 561.7M0 29.0L957 581.5M0 48.8L957 601.3M0 68.6L957 621.1M0 108.2L957 660.7M0 128.0L957 680.5M0 147.8L957 700.3M0 167.6L957 720.1M0 207.2L957 759.7M0 227.0L957 779.5M0 246.8L957 799.3M0 266.6L957 819.1M0 306.2L957 858.7M0 326.0L957 878.5M0 345.8L957 898.3M0 365.6L957 918.1M0 405.2L957 957.7M0 425.0L957 977.5M0 444.8L957 997.3M0 464.6L957 1017.1M0 504.2L957 1056.7M0 524.0L957 1076.5M0 543.8L957 1096.3M0 563.6L957 1116.1M0 603.2L957 1155.7M0 623.0L957 1175.5M0 642.8L957 1195.3M0 662.6L957 1215.1M0 702.2L957 1254.7M0 722.0L957 1274.5M0 741.8L957 1294.3M0 761.6L957 1314.1M0 801.2L957 1353.7M0 821.0L957 1373.5M0 840.8L957 1393.3M0 860.6L957 1413.1M0 900.2L957 1452.7M0 920.0L957 1472.5M0 939.8L957 1492.3M0 959.6L957 1512.1M0 -561.0L957 -1113.5M0 -541.2L957 -1093.7M0 -521.4L957 -1073.9M0 -501.6L957 -1054.1M0 -462.0L957 -1014.5M0 -442.2L957 -994.7M0 -422.4L957 -974.9M0 -402.6L957 -955.1M0 -363.0L957 -915.5M0 -343.2L957 -895.7M0 -323.4L957 -875.9M0 -303.6L957 -856.1M0 -264.0L957 -816.5M0 -244.2L957 -796.7M0 -224.4L957 -776.9M0 -204.6L957 -757.1M0 -165.0L957 -717.5M0 -145.2L957 -697.7M0 -125.4L957 -677.9M0 -105.6L957 -658.1M0 -66.0L957 -618.5M0 -46.2L957 -598.7M0 -26.4L957 -578.9M0 -6.6L957 -559.1M0 33.0L957 -519.5M0 52.8L957 -499.7M0 72.6L957 -479.9M0 92.4L957 -460.1M0 132.0L957 -420.5M0 151.8L957 -400.7M0 171.6L957 -380.9M0 191.4L957 -361.1M0 231.0L957 -321.5M0 250.8L957 -301.7M0 270.6L957 -281.9M0 290.4L957 -262.1M0 330.0L957 -222.5M0 349.8L957 -202.7M0 369.6L957 -182.9M0 389.4L957 -163.1M0 429.0L957 -123.5M0 448.8L957 -103.7M0 468.6L957 -83.9M0 488.4L957 -64.1M0 528.0L957 -24.5M0 547.8L957 -4.7M0 567.6L957 15.1M0 587.4L957 34.9M0 627.0L957 74.5M0 646.8L957 94.3M0 666.6L957 114.1M0 686.4L957 133.9M0 726.0L957 173.5M0 745.8L957 193.3M0 765.6L957 213.1M0 785.4L957 232.9M0 825.0L957 272.5M0 844.8L957 292.3M0 864.6L957 312.1M0 884.4L957 331.9M0 924.0L957 371.5M0 943.8L957 391.3M0 963.6L957 411.1M0 983.4L957 430.9" stroke="#dddde0" stroke-width="1" fill="none"/>
<path d="M0 -505.6L957 46.9M0 -406.6L957 145.9M0 -307.6L957 244.9M0 -208.6L957 343.9M0 -109.6L957 442.9M0 88.4L957 640.9M0 187.4L957 739.9M0 286.4L957 838.9M0 385.4L957 937.9M0 484.4L957 1036.9M0 583.4L957 1135.9M0 682.4L957 1234.9M0 781.4L957 1333.9M0 880.4L957 1432.9M0 979.4L957 1531.9M0 -580.8L957 -1133.3M0 -481.8L957 -1034.3M0 -382.8L957 -935.3M0 -283.8L957 -836.3M0 -184.8L957 -737.3M0 -85.8L957 -638.3M0 13.2L957 -539.3M0 112.2L957 -440.3M0 211.2L957 -341.3M0 310.2L957 -242.3M0 409.2L957 -143.3M0 508.2L957 -44.3M0 706.2L957 153.7M0 805.2L957 252.7M0 904.2L957 351.7" stroke="#bbbbbe" stroke-width="1.1" fill="none"/>
<path d="M0 -10.6L957 541.9" stroke="#e8959c" stroke-width="1.2"/>
<path d="M0 607.2L957 54.7" stroke="#94dd94" stroke-width="1.2"/>
<g transform="matrix(0.6929 -0.4016 0 0.7953 357.0 126.0)"><rect x="4" y="6" width="11" height="78" fill="#a2a2a0" stroke="#1c1c1c" stroke-width="1.2" vector-effect="non-scaling-stroke" /><rect x="20" y="6" width="11" height="78" fill="#a2a2a0" stroke="#1c1c1c" stroke-width="1.2" vector-effect="non-scaling-stroke" /><rect x="36" y="6" width="11" height="78" fill="#a2a2a0" stroke="#1c1c1c" stroke-width="1.2" vector-effect="non-scaling-stroke" /><rect x="52" y="6" width="11" height="78" fill="#a2a2a0" stroke="#1c1c1c" stroke-width="1.2" vector-effect="non-scaling-stroke" /><rect x="68" y="6" width="11" height="78" fill="#a2a2a0" stroke="#1c1c1c" stroke-width="1.2" vector-effect="non-scaling-stroke" /><rect x="84" y="6" width="11" height="78" fill="#a2a2a0" stroke="#1c1c1c" stroke-width="1.2" vector-effect="non-scaling-stroke" /><rect x="100" y="6" width="11" height="78" fill="#a2a2a0" stroke="#1c1c1c" stroke-width="1.2" vector-effect="non-scaling-stroke" /><rect x="4" y="86" width="118" height="8" fill="#b7b0a4" stroke="#1c1c1c" stroke-width="1.2" vector-effect="non-scaling-stroke" /><rect x="4" y="100" width="118" height="8" fill="#b7b0a4" stroke="#1c1c1c" stroke-width="1.2" vector-effect="non-scaling-stroke" /><rect x="4" y="112" width="118" height="8" fill="#b7b0a4" stroke="#1c1c1c" stroke-width="1.2" vector-effect="non-scaling-stroke" /><rect x="121" y="0" width="6" height="127" fill="#c4c4c4" stroke="#1c1c1c" stroke-width="1.6" vector-effect="non-scaling-stroke" /></g><g transform="matrix(0.6984 0.4048 0 0.7953 269.0 75.0)"><rect x="0" y="0" width="126" height="127" fill="#b0b0ad" stroke="#1c1c1c" stroke-width="2.2" vector-effect="non-scaling-stroke" /><rect x="0" y="0" width="43" height="4" fill="#4b4944" /><rect x="53" y="0" width="17" height="4" fill="#4b4944" /><rect x="78" y="0" width="18" height="4" fill="#4b4944" /><rect x="107" y="0" width="19" height="4" fill="#4b4944" /><rect x="20" y="18" width="89" height="109" fill="#ffffff" stroke="#1c1c1c" stroke-width="1.4" vector-effect="non-scaling-stroke" /><rect x="26" y="18" width="73" height="6" fill="#b0b0ad" /><rect x="44" y="18" width="8" height="6" fill="#ffffff" /><rect x="70" y="18" width="7" height="6" fill="#ffffff" /><rect x="27.6" y="23.5" width="70.7" height="103.5" fill="#b0b0ad" stroke="#1c1c1c" stroke-width="1.6" vector-effect="non-scaling-stroke" /><rect x="44.5" y="41" width="37" height="86" fill="#ffffff" stroke="#1c1c1c" stroke-width="1.4" vector-effect="non-scaling-stroke" /><rect x="52" y="41" width="18" height="8" fill="#b0b0ad" /><rect x="55.5" y="48.7" width="17.5" height="78.3" fill="#b0b0ad" stroke="#1c1c1c" stroke-width="1.6" vector-effect="non-scaling-stroke" /><rect x="106.5" y="18" width="2.5" height="109" fill="#1c1c1c" /></g><g transform="matrix(0.6984 0.4048 -0.6929 0.3937 357.0 23.8)"><path d="M0 0H44V127H0Z" fill="#3a3834" stroke="#222" stroke-width="2.2" vector-effect="non-scaling-stroke"/><rect x="18" y="0" width="8" height="108" fill="none" stroke="#222" stroke-width="2" vector-effect="non-scaling-stroke" /><rect x="54" y="0" width="16" height="127" fill="#3a3834" stroke="#222" stroke-width="2.2" vector-effect="non-scaling-stroke" /><rect x="79" y="0" width="17" height="127" fill="#3a3834" stroke="#222" stroke-width="2.2" vector-effect="non-scaling-stroke" /><rect x="107" y="0" width="18" height="127" fill="#3a3834" stroke="#222" stroke-width="2.2" vector-effect="non-scaling-stroke" /></g><g transform="matrix(0.6984 0.4048 -0.6929 0.3937 357.0 22.0)"><path d="M0 0H44V127H0Z" fill="#b5aea1" stroke="#1c1c1c" stroke-width="2.2" vector-effect="non-scaling-stroke"/><rect x="18" y="0" width="8" height="108" fill="#ffffff" stroke="#1c1c1c" stroke-width="2" vector-effect="non-scaling-stroke" /><rect x="54" y="0" width="16" height="127" fill="#b5aea1" stroke="#1c1c1c" stroke-width="2.2" vector-effect="non-scaling-stroke" /><rect x="79" y="0" width="17" height="127" fill="#b5aea1" stroke="#1c1c1c" stroke-width="2.2" vector-effect="non-scaling-stroke" /><rect x="107" y="0" width="18" height="127" fill="#b5aea1" stroke="#1c1c1c" stroke-width="2.2" vector-effect="non-scaling-stroke" /></g><g transform="matrix(0.6929 -0.4016 0 0.7953 475.0 195.0)"><rect x="4" y="6" width="11" height="78" fill="#a2a2a0" stroke="#1c1c1c" stroke-width="1.2" vector-effect="non-scaling-stroke" /><rect x="20" y="6" width="11" height="78" fill="#a2a2a0" stroke="#1c1c1c" stroke-width="1.2" vector-effect="non-scaling-stroke" /><rect x="36" y="6" width="11" height="78" fill="#a2a2a0" stroke="#1c1c1c" stroke-width="1.2" vector-effect="non-scaling-stroke" /><rect x="52" y="6" width="11" height="78" fill="#a2a2a0" stroke="#1c1c1c" stroke-width="1.2" vector-effect="non-scaling-stroke" /><rect x="68" y="6" width="11" height="78" fill="#a2a2a0" stroke="#1c1c1c" stroke-width="1.2" vector-effect="non-scaling-stroke" /><rect x="84" y="6" width="11" height="78" fill="#a2a2a0" stroke="#1c1c1c" stroke-width="1.2" vector-effect="non-scaling-stroke" /><rect x="100" y="6" width="11" height="78" fill="#a2a2a0" stroke="#1c1c1c" stroke-width="1.2" vector-effect="non-scaling-stroke" /><rect x="4" y="86" width="118" height="8" fill="#b7b0a4" stroke="#1c1c1c" stroke-width="1.2" vector-effect="non-scaling-stroke" /><rect x="4" y="100" width="118" height="8" fill="#b7b0a4" stroke="#1c1c1c" stroke-width="1.2" vector-effect="non-scaling-stroke" /><rect x="4" y="112" width="118" height="8" fill="#b7b0a4" stroke="#1c1c1c" stroke-width="1.2" vector-effect="non-scaling-stroke" /><rect x="121" y="0" width="6" height="127" fill="#c4c4c4" stroke="#1c1c1c" stroke-width="1.6" vector-effect="non-scaling-stroke" /></g><g transform="matrix(0.6984 0.4048 0 0.7953 387.0 144.0)"><rect x="0" y="0" width="125" height="127" fill="#b0b0ad" stroke="#1c1c1c" stroke-width="2.2" vector-effect="non-scaling-stroke" /><rect x="0" y="0" width="125" height="4" fill="#4b4944" /><rect x="42" y="0" width="7" height="3" fill="#b0b0ad" /><rect x="18" y="19.6" width="5" height="7" fill="#ffffff" stroke="#1c1c1c" stroke-width="1.2" vector-effect="non-scaling-stroke" /><rect x="44" y="19.6" width="9" height="7" fill="#ffffff" stroke="#1c1c1c" stroke-width="1.2" vector-effect="non-scaling-stroke" /><rect x="18.6" y="43" width="7.4" height="84" fill="#ffffff" stroke="#1c1c1c" stroke-width="1.4" vector-effect="non-scaling-stroke" /><rect x="44" y="43" width="7.7" height="84" fill="#ffffff" stroke="#1c1c1c" stroke-width="1.4" vector-effect="non-scaling-stroke" /><rect x="70.4" y="19" width="9" height="108" fill="#ffffff" stroke="#1c1c1c" stroke-width="1.6" vector-effect="non-scaling-stroke" /><rect x="97" y="19" width="9.7" height="108" fill="#ffffff" stroke="#1c1c1c" stroke-width="1.6" vector-effect="non-scaling-stroke" /><path d="M23 1V27H0M44 18.5H108V127M53 26.5H70M79 26.5H97" fill="none" stroke="#1c1c1c" stroke-width="1.6" vector-effect="non-scaling-stroke"/><path d="M90 127V60H126" fill="none" stroke="rgba(70,70,70,0.22)" stroke-width="5" vector-effect="non-scaling-stroke"/></g><g transform="matrix(0.6984 0.4048 -0.6929 0.3937 475.0 92.8)"><rect x="0" y="0" width="44" height="127" fill="#3a3834" stroke="#222" stroke-width="2.2" vector-effect="non-scaling-stroke" /><rect x="17.5" y="0" width="8" height="106" fill="none" stroke="#222" stroke-width="2" vector-effect="non-scaling-stroke" /><rect x="53" y="0" width="72" height="127" fill="#3a3834" stroke="#222" stroke-width="2.2" vector-effect="non-scaling-stroke" /><rect x="70.5" y="0" width="8.7" height="106" fill="none" stroke="#222" stroke-width="2" vector-effect="non-scaling-stroke" /><rect x="96.7" y="0" width="10.7" height="106" fill="none" stroke="#222" stroke-width="2" vector-effect="non-scaling-stroke" /></g><g transform="matrix(0.6984 0.4048 -0.6929 0.3937 475.0 91.0)"><rect x="0" y="0" width="44" height="127" fill="#b5aea1" stroke="#1c1c1c" stroke-width="2.2" vector-effect="non-scaling-stroke" /><rect x="17.5" y="0" width="8" height="106" fill="#ffffff" stroke="#1c1c1c" stroke-width="2" vector-effect="non-scaling-stroke" /><rect x="53" y="0" width="72" height="127" fill="#b5aea1" stroke="#1c1c1c" stroke-width="2.2" vector-effect="non-scaling-stroke" /><rect x="70.5" y="0" width="8.7" height="106" fill="#ffffff" stroke="#1c1c1c" stroke-width="2" vector-effect="non-scaling-stroke" /><rect x="96.7" y="0" width="10.7" height="106" fill="#ffffff" stroke="#1c1c1c" stroke-width="2" vector-effect="non-scaling-stroke" /></g><g transform="matrix(0.6929 -0.4016 0 0.7953 593.5 264.5)"><rect x="0" y="0" width="127" height="127" fill="#f4f4f4" stroke="#1c1c1c" stroke-width="2" vector-effect="non-scaling-stroke" /><rect x="8" y="4" width="17" height="76" fill="#c4c4c4" stroke="#1c1c1c" stroke-width="1.2" vector-effect="non-scaling-stroke" /><rect x="32" y="4" width="17" height="76" fill="#c4c4c4" stroke="#1c1c1c" stroke-width="1.2" vector-effect="non-scaling-stroke" /><rect x="56" y="4" width="17" height="76" fill="#c4c4c4" stroke="#1c1c1c" stroke-width="1.2" vector-effect="non-scaling-stroke" /><rect x="80" y="4" width="17" height="76" fill="#c4c4c4" stroke="#1c1c1c" stroke-width="1.2" vector-effect="non-scaling-stroke" /><rect x="4" y="80" width="108" height="7" fill="#cbc6bc" stroke="#1c1c1c" stroke-width="1.2" vector-effect="non-scaling-stroke" /><rect x="4" y="92" width="108" height="7" fill="#cbc6bc" stroke="#1c1c1c" stroke-width="1.2" vector-effect="non-scaling-stroke" /><rect x="4" y="104" width="108" height="7" fill="#cbc6bc" stroke="#1c1c1c" stroke-width="1.2" vector-effect="non-scaling-stroke" /><rect x="6" y="95" width="60" height="4" fill="#6d6a66" /><rect x="111" y="0" width="16" height="127" fill="#c9c9c9" stroke="#1c1c1c" stroke-width="2" vector-effect="non-scaling-stroke" /><rect x="0" y="115" width="127" height="12" fill="#bdbab4" stroke="#1c1c1c" stroke-width="2" vector-effect="non-scaling-stroke" /></g><g transform="matrix(0.6984 0.4048 0 0.7953 505.5 213.5)"><rect x="0" y="0" width="126" height="127" fill="#b0b0ad" stroke="#1c1c1c" stroke-width="2.2" vector-effect="non-scaling-stroke" /><rect x="0" y="0" width="126" height="4" fill="#4b4944" /><rect x="73" y="0" width="8" height="3" fill="#b0b0ad" /><rect x="100" y="0" width="9" height="3" fill="#b0b0ad" /><rect x="17.3" y="18.3" width="8.1" height="108.7" fill="#ffffff" stroke="#1c1c1c" stroke-width="1.6" vector-effect="non-scaling-stroke" /><rect x="17.3" y="18.3" width="2" height="108.7" fill="#1c1c1c" /><rect x="44.5" y="18.3" width="9.1" height="108.7" fill="#ffffff" stroke="#1c1c1c" stroke-width="1.6" vector-effect="non-scaling-stroke" /><rect x="44.5" y="18.3" width="2" height="108.7" fill="#1c1c1c" /><rect x="71" y="18.3" width="10.4" height="108.7" fill="#ffffff" stroke="#1c1c1c" stroke-width="1.6" vector-effect="non-scaling-stroke" /><rect x="71" y="18.3" width="2" height="108.7" fill="#1c1c1c" /><rect x="99" y="18.3" width="8.4" height="108.7" fill="#ffffff" stroke="#1c1c1c" stroke-width="1.6" vector-effect="non-scaling-stroke" /><rect x="99" y="18.3" width="2" height="108.7" fill="#1c1c1c" /><path d="M12 127V34H114V127M30 127V52H96V127M48 127V70H78V127" fill="none" stroke="rgba(70,70,70,0.28)" stroke-width="5" vector-effect="non-scaling-stroke"/></g><g transform="matrix(0.6984 0.4048 -0.6929 0.3937 593.5 162.3)"><path d="M0 0H18V109H52V0H70V127H0Z" fill="#3a3834" stroke="#222" stroke-width="2.2" vector-effect="non-scaling-stroke"/><rect x="26" y="0" width="18" height="100" fill="#3a3834" stroke="#222" stroke-width="2.2" vector-effect="non-scaling-stroke" /><rect x="79" y="0" width="17" height="127" fill="#3a3834" stroke="#222" stroke-width="2.2" vector-effect="non-scaling-stroke" /><rect x="107" y="0" width="18" height="127" fill="#3a3834" stroke="#222" stroke-width="2.2" vector-effect="non-scaling-stroke" /></g><g transform="matrix(0.6984 0.4048 -0.6929 0.3937 593.5 160.5)"><path d="M0 0H18V109H52V0H70V127H0Z" fill="#b5aea1" stroke="#1c1c1c" stroke-width="2.2" vector-effect="non-scaling-stroke"/><rect x="26" y="0" width="18" height="100" fill="#b5aea1" stroke="#1c1c1c" stroke-width="2.2" vector-effect="non-scaling-stroke" /><rect x="79" y="0" width="17" height="127" fill="#b5aea1" stroke="#1c1c1c" stroke-width="2.2" vector-effect="non-scaling-stroke" /><rect x="107" y="0" width="18" height="127" fill="#b5aea1" stroke="#1c1c1c" stroke-width="2.2" vector-effect="non-scaling-stroke" /></g><circle cx="302" cy="192" r="5" fill="none" stroke="#a98be8" stroke-width="2.5"/>
<rect x="1" y="1" width="955" height="392" fill="none" stroke="#2b2b2b" stroke-width="2"/>
</svg>
<div class="a" style="left:5px;top:180px;width:28px;height:342px;background:#f0f0f0"></div>
<svg class="a" style="left:12px;top:189px" width="13" height="9"><path d="M0 0l6 4.5L0 9zM6 0l6 4.5L6 9z" fill="#333"/></svg>
<div class="t" style="left:-20px;top:302px;width:78px;font-size:13.5px;color:#222;transform:rotate(-90deg);transform-origin:39px 8px;text-align:center">BROWSER</div>
<div class="t" style="left:-20px;top:458px;width:78px;font-size:13.5px;color:#222;transform:rotate(-90deg);transform-origin:39px 8px;text-align:center">COMMENTS</div>
<div class="a" style="left:1888px;top:181px;width:29px;height:202px;background:#f0f0f0"></div>
<svg class="a" style="left:1895px;top:189px" width="13" height="9"><path d="M13 0L7 4.5 13 9zM7 0L1 4.5 7 9z" fill="#333"/></svg>
<div class="t" style="left:1858px;top:316px;width:90px;font-size:13.2px;color:#222;transform:rotate(-90deg);transform-origin:45px 8px;text-align:center">QUICK SETUP</div>
<svg class="a" style="left:1862px;top:186px" width="26" height="52"><path d="M6 11L26 5" fill="none" stroke="#666" stroke-width="0.9"/><path d="M6 11l20 12v25L7 35z" fill="#eeeeee" stroke="#666" stroke-width="0.9"/><path d="M6 11L1 3" stroke="#5a5ad8" stroke-width="1.6"/><path d="M6.5 11L7 35" stroke="#5a5ad8" stroke-width="1.8"/><path d="M7 35l19 13" stroke="#e8a0a8" stroke-width="2"/><text x="11" y="26" font-size="5" fill="#888" font-family="Liberation Sans" transform="rotate(32 11 26)">RIGHT</text></svg>
<div class="a" style="left:973px;top:531px;width:294px;height:30px;background:rgba(240,240,240,0.92)"></div>
<svg class="a" style="left:973px;top:531px" width="294" height="30">
<g fill="none" stroke="#555" stroke-width="1">
<ellipse cx="13" cy="14.5" rx="9.5" ry="5.5"/><ellipse cx="13" cy="14.5" rx="4" ry="9.5"/></g>
<path d="M13 12v5M10.5 14.5h5" stroke="#2a5fae" stroke-width="1.3"/>
<path d="M29 12h7l-3.5 4z" fill="#222"/>
<rect x="45.5" y="10.5" width="17" height="12" fill="#e8e8e8" stroke="#666"/><rect x="48" y="14" width="12" height="6" fill="#8aa3c8"/><path d="M47 10l3-4h9l-2 4" fill="#ddd" stroke="#666" stroke-width="0.8"/>
<g transform="translate(79 4)"><path d="M6 21C4 19 1.5 15.5 1 13.5C0.7 12.3 2 11.6 3 12.5L5.5 15V4.5C5.5 3.2 7.5 3.2 7.5 4.5V11V2.5C7.5 1.2 9.5 1.2 9.5 2.5V11V3C9.5 1.7 11.5 1.7 11.5 3V11V4.5C11.5 3.3 13.5 3.3 13.5 4.5V14C13.5 17.5 12.5 19.5 11 21Z" fill="#fafafa" stroke="#444" stroke-width="1"/></g>
<circle cx="116.5" cy="13" r="6" fill="#eef3f8" stroke="#444" stroke-width="1.3"/><path d="M121 18l5 5" stroke="#333" stroke-width="2.5"/><path d="M122 5v6M119 8h6" stroke="#333" stroke-width="1"/>
<rect x="143.5" y="5.5" width="17" height="18" fill="none" stroke="#555" stroke-dasharray="2 1.5"/><circle cx="150" cy="13" r="5.5" fill="#eef3f8" stroke="#444" stroke-width="1.3"/><path d="M154 17l5 5" stroke="#333" stroke-width="2.5"/>
<path d="M168 12h7l-3.5 4z" fill="#222"/>
<rect x="183.5" y="5.5" width="19" height="14" rx="1" fill="#8fb0e0" stroke="#666"/><rect x="186" y="8" width="14" height="9" fill="#a9c6ef"/><path d="M189 21h8v2h-8z" fill="#888"/>
<path d="M207 12h7l-3.5 4z" fill="#222"/>
<rect x="222.5" y="5.5" width="18" height="18" fill="#e6e6e6" stroke="#666"/><path d="M222 10h19M222 14h19M222 18h19M227 5v19M231 5v19M236 5v19" stroke="#777" stroke-width="1"/>
<path d="M246 12h7l-3.5 4z" fill="#222"/>
<rect x="261.5" y="6.5" width="18" height="17" fill="#6f9ad6" stroke="#3b6bb0"/><path d="M270.5 6v17M261 15h18" stroke="#dfe8f5" stroke-width="1"/>
<path d="M284 12h7l-3.5 4z" fill="#222"/>
</svg>
<svg class="a" style="left:1885px;top:944px" width="19" height="19"><path d="M9.5 1a8.5 8.5 0 1 0 0 17h8.5V9.5A8.5 8.5 0 0 0 9.5 1z" fill="#111"/><path d="M4 11l10-6M5 13l10-6M9 14l6-4" stroke="#eee" stroke-width="1"/></svg>
<!--/VP-->
<div id="timeline" class="a"></div>
<div id="taskbar" class="a"></div>
<!--BOT-->
<div class="a" style="left:0;top:968px;width:1920px;height:1px;background:#d0d0d0"></div>
<svg class="a" style="left:12px;top:989px" width="145" height="19"><rect x="1" y="2" width="3" height="15" fill="#626262"/><path d="M4 9.5L15 2v15z" fill="#626262"/><path d="M32 9.5L44 1v17z" fill="#626262"/><rect x="46" y="6" width="3" height="8" fill="#626262"/><path d="M64 1l15 8.5L64 18z" fill="#626262"/><rect x="94" y="6" width="3" height="8" fill="#626262"/><path d="M98.5 1l12 8.5-12 8.5z" fill="#626262"/><path d="M126 2l12 7.5L126 17z" fill="#626262"/><rect x="139" y="2" width="3" height="15" fill="#626262"/></svg>
<svg class="a" style="left:183px;top:988px" width="19" height="18"><rect x="0" y="0" width="19" height="18" fill="#7fc3f5"/><circle cx="13" cy="5" r="2.3" fill="#f4f4f4"/><path d="M0 18v-5l5-5 5 5 3-2 6 5v2z" fill="#3f87c8"/></svg>
<svg class="a" style="left:213px;top:988px" width="20" height="20"><rect x="1.5" y="1.5" width="16" height="16" fill="none" stroke="#5b8fd0" stroke-width="1" stroke-dasharray="2 1"/><path d="M5 5v8M5 5h9" stroke="#5b8fd0" stroke-width="1"/><path d="M5 13C8 12 11 9 12 5" fill="none" stroke="#4a6ea8" stroke-width="1"/><path d="M10 18l8-8 2 2-8 8h-2z" fill="#f2a83a"/><path d="M17 10l2-2 2 2-2 2z" fill="#e04a3a"/></svg>
<svg class="a" style="left:243px;top:987px" width="20" height="21"><path d="M1 6l5-5h10v13l-5 5H1z" fill="#5aa6e8"/><path d="M11 6l5-5v13l-5 5z" fill="#3a86c8"/><path d="M1 6l5-5h10l-5 5z" fill="#8cc6f4"/><path d="M1 19h10l5-5v3l-5 4H1z" fill="#b8c8d8"/><path d="M18.5 0v14" stroke="#333" stroke-width="1"/><path d="M17 3l1.5-3 1.5 3z" fill="#333"/></svg>
<svg class="a" style="left:273px;top:988px" width="20" height="20"><rect x="1.5" y="1.5" width="16" height="16" fill="none" stroke="#5b8fd0" stroke-width="1" stroke-dasharray="2 1"/><path d="M5 5v8M5 5h9" stroke="#5b8fd0" stroke-width="1"/><path d="M5 13C8 12 11 9 12 5" fill="none" stroke="#4a6ea8" stroke-width="1"/><path d="M10 18l8-8 2 2-8 8h-2z" fill="#f2a83a"/><path d="M17 10l2-2 2 2-2 2z" fill="#e04a3a"/></svg>
<svg class="a" style="left:303px;top:988px" width="18" height="18" viewBox="0 0 18 18"><path d="M9 0l3.5 4H10v4h4V5.5L18 9l-4 3.5V10h-4v4h2.5L9 18l-3.5-4H8v-4H4v2.5L0 9l4-3.5V8h4V4H5.5z" fill="#222"/></svg>
<svg class="a" style="left:333px;top:988px" width="18" height="18" viewBox="0 0 18 18"><path d="M9 0l3.5 4H10v4h4V5.5L18 9l-4 3.5V10h-4v4h2.5L9 18l-3.5-4H8v-4H4v2.5L0 9l4-3.5V8h4V4H5.5z" fill="#222"/></svg>
<svg class="a" style="left:363px;top:988px" width="18" height="18" viewBox="0 0 18 18"><path d="M9 0l3.5 4H10v4h4V5.5L18 9l-4 3.5V10h-4v4h2.5L9 18l-3.5-4H8v-4H4v2.5L0 9l4-3.5V8h4V4H5.5z" fill="#222"/></svg>
<svg class="a" style="left:393px;top:988px" width="18" height="18" viewBox="0 0 18 18"><path d="M9 0l3.5 4H10v4h4V5.5L18 9l-4 3.5V10h-4v4h2.5L9 18l-3.5-4H8v-4H4v2.5L0 9l4-3.5V8h4V4H5.5z" fill="#222"/></svg>
<svg class="a" style="left:424px;top:988px" width="19" height="20"><rect x="1" y="1" width="7" height="9" rx="2" fill="#ddd" stroke="#555" stroke-width="1.2"/><rect x="10" y="9" width="7" height="9" rx="2" fill="#ddd" stroke="#555" stroke-width="1.2"/><path d="M4 12v3h4" fill="none" stroke="#5b8fd0" stroke-width="1"/></svg>
<svg class="a" style="left:453px;top:988px" width="18" height="18" viewBox="0 0 18 18"><path d="M9 0l3.5 4H10v4h4V5.5L18 9l-4 3.5V10h-4v4h2.5L9 18l-3.5-4H8v-4H4v2.5L0 9l4-3.5V8h4V4H5.5z" fill="#222"/></svg>
<svg class="a" style="left:483px;top:988px" width="18" height="18" viewBox="0 0 18 18"><path d="M9 0l3.5 4H10v4h4V5.5L18 9l-4 3.5V10h-4v4h2.5L9 18l-3.5-4H8v-4H4v2.5L0 9l4-3.5V8h4V4H5.5z" fill="#222"/></svg>
<svg class="a" style="left:513px;top:988px" width="18" height="18" viewBox="0 0 18 18"><path d="M9 0l3.5 4H10v4h4V5.5L18 9l-4 3.5V10h-4v4h2.5L9 18l-3.5-4H8v-4H4v2.5L0 9l4-3.5V8h4V4H5.5z" fill="#222"/></svg>
<svg class="a" style="left:543px;top:988px" width="18" height="18" viewBox="0 0 18 18"><path d="M9 0l3.5 4H10v4h4V5.5L18 9l-4 3.5V10h-4v4h2.5L9 18l-3.5-4H8v-4H4v2.5L0 9l4-3.5V8h4V4H5.5z" fill="#222"/></svg>
<svg class="a" style="left:573px;top:988px" width="18" height="18" viewBox="0 0 18 18"><path d="M9 0l3.5 4H10v4h4V5.5L18 9l-4 3.5V10h-4v4h2.5L9 18l-3.5-4H8v-4H4v2.5L0 9l4-3.5V8h4V4H5.5z" fill="#222"/></svg>
<div class="a" style="left:193px;top:1018px;width:391px;height:2px;background:#c8c8c8"></div>
<div class="a" style="left:192px;top:1012px;width:2px;height:7px;background:#c8c8c8"></div>
<div class="a" style="left:222px;top:1012px;width:2px;height:7px;background:#c8c8c8"></div>
<div class="a" style="left:252px;top:1012px;width:2px;height:7px;background:#c8c8c8"></div>
<div class="a" style="left:282px;top:1012px;width:2px;height:7px;background:#c8c8c8"></div>
<div class="a" style="left:312px;top:1012px;width:2px;height:7px;background:#c8c8c8"></div>
<div class="a" style="left:342px;top:1012px;width:2px;height:7px;background:#c8c8c8"></div>
<div class="a" style="left:372px;top:1012px;width:2px;height:7px;background:#c8c8c8"></div>
<div class="a" style="left:402px;top:1012px;width:2px;height:7px;background:#c8c8c8"></div>
<div class="a" style="left:432px;top:1012px;width:2px;height:7px;background:#c8c8c8"></div>
<div class="a" style="left:462px;top:1012px;width:2px;height:7px;background:#c8c8c8"></div>
<div class="a" style="left:492px;top:1012px;width:2px;height:7px;background:#c8c8c8"></div>
<div class="a" style="left:522px;top:1012px;width:2px;height:7px;background:#c8c8c8"></div>
<div class="a" style="left:552px;top:1012px;width:2px;height:7px;background:#c8c8c8"></div>
<div class="a" style="left:582px;top:1012px;width:2px;height:7px;background:#c8c8c8"></div>
<svg class="a" style="left:590px;top:980px" width="16" height="41"><path d="M0 0h15v5l-5 6v30H5V11L0 5z" fill="#626262"/></svg>
<svg class="a" style="left:1884px;top:989px" width="19" height="19" viewBox="0 0 19 19"><path d="M8 0h3l.5 2.6 1.6.7 2.2-1.5 2.1 2.1-1.5 2.2.7 1.6L19 8v3l-2.6.5-.7 1.6 1.5 2.2-2.1 2.1-2.2-1.5-1.6.7L11 19H8l-.5-2.6-1.6-.7-2.2 1.5-2.1-2.1 1.5-2.2-.7-1.6L0 11V8l2.6-.5.7-1.6-1.5-2.2 2.1-2.1 2.2 1.5 1.6-.7z" fill="#808080"/><circle cx="9.5" cy="9.5" r="3.2" fill="#f0f0f0"/></svg>
<div class="a" style="left:0;top:1030px;width:1920px;height:50px;background:linear-gradient(90deg,#1c1c1e 0%,#1d1d1f 50%,#24241f 58%,#2c2a22 63%,#2a2620 68%,#1e1e1e 74%,#1b1b1b 100%)"></div>
<svg class="a" style="left:20px;top:1045px" width="21" height="20"><path d="M0 2.8l8.5-1.2v8H0zM9.5 1.5L21 0v9.6H9.5zM0 10.5h8.5v8L0 17.3zM9.5 10.5H21V20L9.5 18.5z" fill="#fff"/></svg>
<div class="a" style="left:60px;top:1030px;width:360px;height:50px;background:#2d2d2d;border:1px solid #3c3c3c;border-bottom:none"></div>
<svg class="a" style="left:74px;top:1045px" width="22" height="21"><circle cx="13" cy="8" r="6.5" fill="none" stroke="#d8d8d8" stroke-width="1.6"/><path d="M8.5 12.5L1 20" stroke="#d8d8d8" stroke-width="1.7"/></svg>
<svg class="a" style="left:110px;top:1047px" width="142" height="17"><path d="M3 3C6 4 9 4 12 3M2 12C5 14 10 14 13 12" fill="none" stroke="#cfcfcf" stroke-width="1.3" stroke-linecap="round"/><path d="M18.7 3C21.7 4 24.7 4 27.7 3M17.7 12C20.7 14 25.7 14 28.7 12" fill="none" stroke="#cfcfcf" stroke-width="1.3" stroke-linecap="round"/><path d="M34.4 1C33.4 6 33.4 11 34.4 15M38.4 3H44.4M37.4 12C39.4 14 42.4 14 45.4 13" fill="none" stroke="#cfcfcf" stroke-width="1.3" stroke-linecap="round"/><path d="M52.1 1H55.1C55.1 7 52.1 12 48.1 15M55.1 5C56.1 9 59.1 13 62.1 15" fill="none" stroke="#cfcfcf" stroke-width="1.3" stroke-linecap="round"/><path d="M63.8 4H75.8C75.8 10 74.8 14 71.8 14M69.8 0C69.8 7 67.8 12 63.8 15" fill="none" stroke="#cfcfcf" stroke-width="1.3" stroke-linecap="round"/><path d="M83.5 1V11C83.5 15 88.5 15 91.5 11" fill="none" stroke="#cfcfcf" stroke-width="1.3" stroke-linecap="round"/><path d="M95.2 3C100.2 3 104.2 2 108.2 2C102.2 5 100.2 12 105.2 15" fill="none" stroke="#cfcfcf" stroke-width="1.3" stroke-linecap="round"/><path d="M112.9 0V15M109.9 4H115.9M112.9 5L109.9 11M112.9 6L115.9 9M119.9 0L115.9 5M119.9 0L124.9 5M116.9 6H123.9V10H116.9ZM115.9 12H124.9M119.9 10L116.9 15M120.9 12L124.9 15M119.9 6V10" fill="none" stroke="#cfcfcf" stroke-width="1.3" stroke-linecap="round"/><path d="M126.6 2H139.6M133.1 0V3M126.6 4V6M139.6 4V6M126.6 5H139.6M133.6 6L129.6 9H136.6M134.6 8L137.6 10M126.6 11H139.6M133.1 9V15M130.6 13L127.6 15M135.6 13L138.6 15" fill="none" stroke="#cfcfcf" stroke-width="1.3" stroke-linecap="round"/></svg>
<svg class="a" style="left:324px;top:1042px" width="94" height="28"><path d="M1 1C25 10 65 10 92 1" fill="none" stroke="#aaa" stroke-width="1.2"/><path d="M6 4l18 3-2 18-17-3z" fill="#f4b62a"/><path d="M27 7h18l-1 17H27z" fill="#e24e2b"/><path d="M48 7l18-1 1 17-18 1z" fill="#2ec0b0"/><path d="M70 5l18-3 2 17-17 3z" fill="#8a5ad6"/><g fill="none" stroke="#fff" stroke-width="1" opacity="0.7"><circle cx="15" cy="14" r="4"/><circle cx="36" cy="15" r="4"/><circle cx="57" cy="15" r="4"/><circle cx="79" cy="12" r="4"/></g></svg>
<svg class="a" style="left:439px;top:1044px" width="22" height="21"><path d="M1 1h14M1 20h14" stroke="#fff" stroke-width="1.5"/><rect x="2" y="5" width="11" height="11" fill="none" stroke="#fff" stroke-width="1.5"/><path d="M20 1v5M20 9v3M20 15v5" stroke="#fff" stroke-width="1.5"/></svg>
<svg class="a" style="left:498px;top:1040px" width="31" height="28"><defs><linearGradient id="cp" x1="0" y1="0" x2="1" y2="1"><stop offset="0" stop-color="#2fb5f0"/><stop offset="0.45" stop-color="#3cc46a"/><stop offset="0.7" stop-color="#f2b23a"/><stop offset="1" stop-color="#d85ad8"/></linearGradient></defs><path d="M9 1h10c3 0 4 2 3 5L15 24c-1 2-2 3-5 3H5c-3 0-5-2-4-5L6 5c1-3 2-4 3-4z" fill="url(#cp)"/><path d="M19 4h6c3 0 5 2 4 5l-5 15c-1 2-2 3-5 3h-6z" fill="#c86ae8" opacity="0.85"/></svg>
<svg class="a" style="left:561px;top:1043px" width="30" height="23"><path d="M0 2h11l3 3h16v18H0z" fill="#f8c843"/><rect x="0" y="7" width="30" height="16" fill="#fbd65a"/><rect x="8" y="12" width="14" height="11" fill="#2d8ad8"/><rect x="11" y="16" width="8" height="7" fill="#fbd65a"/></svg>
<svg class="a" style="left:623px;top:1040px" width="31" height="31"><circle cx="15" cy="15" r="14.5" fill="#e33b2e"/><path d="M15 15L2.4 22.3A14.5 14.5 0 0 0 22.3 27.6z" fill="#2ea043"/><path d="M15 15h14.5A14.5 14.5 0 0 1 22.3 27.6z" fill="#f8c02c"/><path d="M15 15L27.6 7.7A14.5 14.5 0 0 1 29.5 15z" fill="#f8c02c"/><circle cx="15" cy="15" r="6.5" fill="#fff"/><circle cx="15" cy="15" r="5" fill="#3b7de8"/><circle cx="23" cy="24" r="7" fill="#3a4650"/><circle cx="23" cy="22" r="3" fill="#d8b890"/></svg>
<svg class="a" style="left:687px;top:1041px" width="26" height="27"><rect width="26" height="27" fill="#f4f4f4"/><path d="M8 13.5l10-6v12z" fill="none" stroke="#222" stroke-width="2"/><path d="M12 13.5h6M18 7.5v12" stroke="#222" stroke-width="1.5"/></svg>
<svg class="a" style="left:747px;top:1040px" width="32" height="32"><circle cx="15" cy="15" r="15" fill="#5865f2"/><path d="M8 10c2-1.5 4-2 5-2l.5 1h3l.5-1c1 0 3 .5 5 2 1.5 3 2 6 2 9-1.5 1.5-3 2-4.5 2l-1-1.5 2-1c-4 2-9 2-13 0l2 1-1 1.5C7 21 5.5 20.5 4 19c0-3 .5-6 4-9z" fill="#fff"/><circle cx="22" cy="22" r="8.5" fill="#e04848" stroke="#1c1c1e" stroke-width="1"/><text x="15.5" y="26" font-size="10" font-family="Liberation Sans" fill="#fff">9+</text></svg>
<svg class="a" style="left:809px;top:1040px" width="30" height="28"><circle cx="15" cy="14" r="13.5" fill="#f6f6f6"/><g stroke-width="3.2" stroke-linecap="round"><path d="M12 6v6" stroke="#36c5f0"/><path d="M7 12h5" stroke="#36c5f0"/><path d="M18 6v6" stroke="#2eb67d"/><path d="M18 12h5" stroke="#2eb67d"/><path d="M12 16v6" stroke="#e01e5a"/><path d="M7 16h5" stroke="#e01e5a"/><path d="M18 16v6" stroke="#ecb22e"/><path d="M18 16h5" stroke="#ecb22e"/></g></svg>
<div class="a" style="left:856px;top:1030px;width:61px;height:50px;background:#474747"></div>
<svg class="a" style="left:871px;top:1040px" width="29" height="29"><path d="M4 1h22v27H4z" fill="#e8641c"/><path d="M0 3h24v25H0z" fill="#f47a20"/><path d="M2 21h22v7H4c-1 0-2-1-2-2z" fill="#9b3c14"/><text x="7" y="17" font-size="15" font-weight="bold" font-family="Liberation Sans" fill="#fff">F</text><text x="6" y="27" font-size="5.5" font-weight="bold" font-family="Liberation Sans" fill="#fff">FUS</text></svg>
<div class="a" style="left:737px;top:1077px;width:51px;height:3px;background:#b9b4ea"></div>
<div class="a" style="left:799px;top:1077px;width:51px;height:3px;background:#b9b4ea"></div>
<div class="a" style="left:856px;top:1077px;width:61px;height:3px;background:#b9b4ea"></div>
<svg class="a" style="left:1415px;top:1040px" width="32" height="30"><circle cx="14" cy="16" r="13" fill="#f2a53a"/><path d="M3 12h14M1 17h18M3 22h12" stroke="#d8582a" stroke-width="2"/><circle cx="24" cy="8" r="7" fill="#e0362e"/><text x="21" y="12" font-size="10" font-family="Liberation Sans" fill="#fff">1</text></svg>
<div class="t" style="left:1457px;top:1047px;font-size:17.5px;color:#fff">19°C</div>
<div class="t" style="left:1505px;top:1047px;font-size:17.5px;color:#fff">Haze</div>
<svg class="a" style="left:1573px;top:1049px" width="19" height="12"><path d="M1 11L9.5 2 18 11" fill="none" stroke="#fff" stroke-width="1.5"/></svg>
<svg class="a" style="left:1605px;top:1046px" width="17" height="19"><rect x="1" y="5" width="10" height="9" rx="1.5" fill="none" stroke="#fff" stroke-width="1.3"/><path d="M11 8l4-2v7l-4-2z" fill="none" stroke="#fff" stroke-width="1.3"/><path d="M3 2a8 8 0 0 1 8 0M3 17a8 8 0 0 0 8 0" fill="none" stroke="#fff" stroke-width="1"/></svg>
<svg class="a" style="left:1631px;top:1047px" width="22" height="16"><rect x="3" y="5" width="16" height="9" fill="none" stroke="#fff" stroke-width="1.3"/><rect x="5" y="7" width="12" height="5" fill="#fff"/><path d="M19.5 8v3" stroke="#fff" stroke-width="1.5"/><path d="M2 0v4M5 0v4M1 4h5" stroke="#fff" stroke-width="1"/></svg>
<svg class="a" style="left:1664px;top:1047px" width="17" height="17"><path d="M1 15A14 14 0 0 1 15 1M4 15A11 11 0 0 1 15 4M7 15A8 8 0 0 1 15 7" fill="none" stroke="#9a9a9a" stroke-width="1.2"/><path d="M10 15A5 5 0 0 1 15 10" fill="none" stroke="#fff" stroke-width="1.5"/><circle cx="14" cy="14" r="1.6" fill="#fff"/></svg>
<svg class="a" style="left:1691px;top:1048px" width="21" height="16"><path d="M1 5h4l5-4v14l-5-4H1z" fill="none" stroke="#fff" stroke-width="1.3"/><path d="M13 5l6 6M19 5l-6 6" stroke="#fff" stroke-width="1.3"/></svg>
<div class="t" style="left:1725px;top:1047px;font-size:15px;color:#fff">ENG</div>
<div class="t" style="left:1790px;top:1037px;font-size:14.5px;color:#fff">10:32</div>
<div class="t" style="left:1770px;top:1059px;font-size:15px;color:#fff">2025/09/15</div>
<svg class="a" style="left:1868px;top:1044px" width="34" height="34"><path d="M1 2h20v14H8l-4 3v-3H1z" fill="#fff"/><path d="M4 6h14M4 9h14M4 12h10" stroke="#1c1c1c" stroke-width="1"/><circle cx="21" cy="21" r="11" fill="#1c1c1c" stroke="#bbb" stroke-width="1"/><text x="14" y="26" font-size="13" font-family="Liberation Sans" fill="#fff">10</text></svg>
<div class="a" style="left:1915px;top:1030px;width:1px;height:50px;background:#555"></div>
<!--/BOT-->
</body></html>
